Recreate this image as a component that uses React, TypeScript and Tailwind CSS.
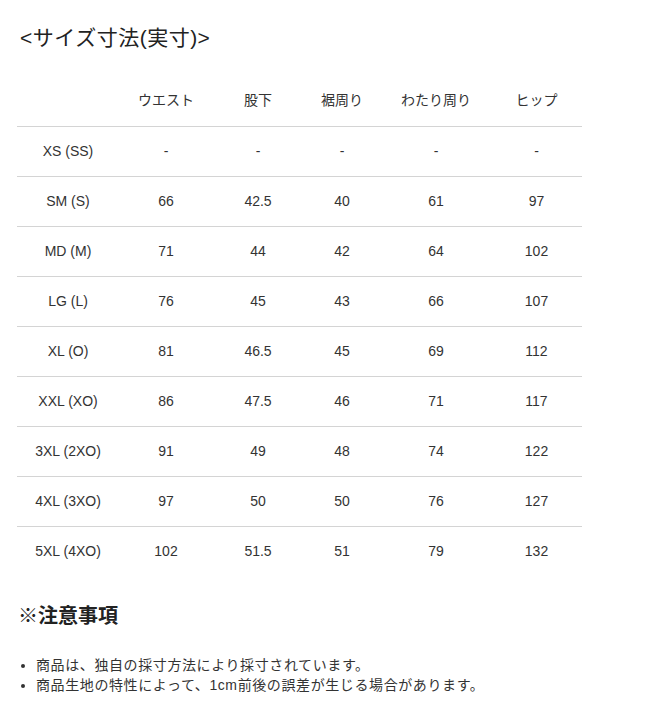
const headers = ["ウエスト", "股下", "裾周り", "わたり周り", "ヒップ"];

const rows: [string, string[]][] = [
  ["XS (SS)", ["-", "-", "-", "-", "-"]],
  ["SM (S)", ["66", "42.5", "40", "61", "97"]],
  ["MD (M)", ["71", "44", "42", "64", "102"]],
  ["LG (L)", ["76", "45", "43", "66", "107"]],
  ["XL (O)", ["81", "46.5", "45", "69", "112"]],
  ["XXL (XO)", ["86", "47.5", "46", "71", "117"]],
  ["3XL (2XO)", ["91", "49", "48", "74", "122"]],
  ["4XL (3XO)", ["97", "50", "50", "76", "127"]],
  ["5XL (4XO)", ["102", "51.5", "51", "79", "132"]],
];

// column widths so the centers match the sheet
const cols = ["w-[102px]", "w-[94px]", "w-[90px]", "w-[78px]", "w-[110px]", "w-[91px]"];

export default function App() {
  return (
    <div
      className="bg-white text-[#333] w-[665px] h-[720px] overflow-hidden"
      style={{ fontFamily: '"Liberation Sans", "Noto Sans CJK JP", sans-serif' }}
    >
      <h2 className="pl-[20px] pt-[26px] text-[21px] leading-[24px] tracking-[0.5px] text-[#222]">
        &lt;サイズ寸法(実寸)&gt;
      </h2>

      <table className="ml-[17px] mt-[25px] w-[565px] border-collapse text-[14px] table-fixed">
        <thead>
          <tr className="h-[51px] border-b border-[#d4d4d4]">
            <th className={cols[0]}></th>
            {headers.map((h, i) => (
              <th key={h} className={`${cols[i + 1]} font-normal text-center pt-[1px]`}>
                {h}
              </th>
            ))}
          </tr>
        </thead>
        <tbody>
          {rows.map(([label, vals], r) => (
            <tr
              key={label}
              className={
                r === rows.length - 1 ? "h-[50px]" : "h-[50px] border-b border-[#d4d4d4]"
              }
            >
              <td className="text-center">{label}</td>
              {vals.map((v, i) => (
                <td key={i} className="text-center">
                  {v}
                </td>
              ))}
            </tr>
          ))}
        </tbody>
      </table>

      <h3 className="pl-[18px] mt-[28px] text-[20px] leading-[24px] font-bold text-[#222]">
        ※注意事項
      </h3>

      <ul className="mt-[27px] pl-[36px] list-disc text-[14px] leading-[20px] tracking-[0.6px] text-[#333]">
        <li>商品は、独自の採寸方法により採寸されています。</li>
        <li>商品生地の特性によって、1cm前後の誤差が生じる場合があります。</li>
      </ul>
    </div>
  );
}
